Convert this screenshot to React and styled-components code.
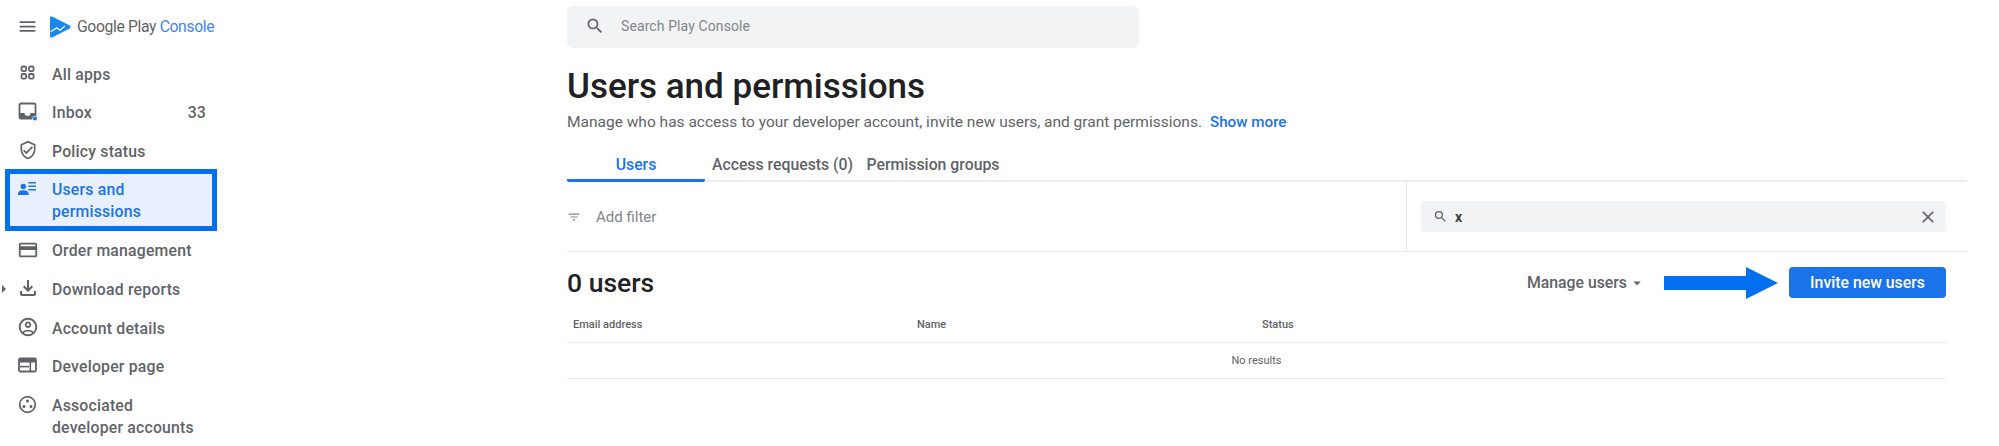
import styled, { createGlobalStyle } from 'styled-components';
import {
  MdMenu,
  MdSearch,
  MdClose,
  MdFilterList,
  MdArrowDropDown,
  MdOutlineVerifiedUser,
  MdOutlineCreditCard,
  MdOutlineFileDownload,
  MdOutlineAccountCircle,
} from 'react-icons/md';

const GlobalStyle = createGlobalStyle`
  html, body {
    margin: 0;
    padding: 0;
    background: #fff;
  }
  body {
    font-family: Roboto, 'Liberation Sans', sans-serif;
    overflow: hidden;
  }
`;

const Page = styled.div`
  display: flex;
  width: 1999px;
  height: 446px;
  overflow: hidden;
`;

const Sidebar = styled.aside`
  flex: 0 0 567px;
  display: flex;
  flex-direction: column;
`;

const Brand = styled.div`
  height: 56px;
  display: flex;
  align-items: center;
  gap: 12px;
  padding: 0 0 1px 17px;
  box-sizing: border-box;
  color: #5f6368;
`;

const BrandName = styled.span`
  margin-left: -6px;
  font-size: 15.7px;
  letter-spacing: -0.35px;
  color: #5f6368;
  span {
    color: #4285f4;
  }
`;

const Nav = styled.nav`
  display: flex;
  flex-direction: column;
  gap: 0.7px;
  width: 217px;
`;

const NavRow = styled.a`
  display: flex;
  align-items: flex-start;
  position: relative;
  padding: 9px 11px 7px 18px;
  font-size: 15.8px;
  font-weight: 500;
  line-height: 22px;
  letter-spacing: 0.2px;
  color: #5f6368;
`;

const ActiveRow = styled(NavRow)`
  margin: -2px 0 0 5px;
  padding: 5px 6px 3px 8px;
  border: 5px solid #0070f0;
  background: #e8f0fe;
  color: #1a73e8;
`;

const IconSlot = styled.span`
  flex: 0 0 19px;
  width: 19px;
  min-width: 0;
  height: 19px;
  display: flex;
  align-items: center;
  justify-content: center;
  svg {
    flex: 0 0 auto;
  }
`;

const NavLabel = styled.span`
  margin-left: 15px;
  flex: 1;
  white-space: nowrap;
`;

const ExpandMark = styled.span`
  position: absolute;
  left: 2px;
  top: 15px;
  border-left: 4px solid #5f6368;
  border-top: 4px solid transparent;
  border-bottom: 4px solid transparent;
`;

const Main = styled.main`
  flex: 1;
  display: flex;
  flex-direction: column;
  padding-right: 32px;
  min-width: 0;
`;

const TopSearch = styled.div`
  width: 572px;
  height: 42px;
  margin-top: 6px;
  padding: 0 0 2px 18px;
  box-sizing: border-box;
  display: flex;
  align-items: center;
  gap: 16px;
  border-radius: 6px;
  background: #f1f3f4;
  color: #5f6368;
  font-size: 14px;
  span {
    color: #80868b;
    letter-spacing: 0.1px;
  }
`;

const Title = styled.h1`
  margin: 17px 0 0;
  font-size: 35px;
  font-weight: 500;
  line-height: 44px;
  color: #202124;
`;

const Description = styled.p`
  margin: 3px 0 0;
  font-size: 15.5px;
  line-height: 20px;
  color: #5f6368;
  white-space: nowrap;
`;

const ShowMore = styled.a`
  margin-left: 8px;
  font-size: 15.2px;
  font-weight: 500;
  color: #1a73e8;
`;

const Tabs = styled.div`
  display: flex;
  height: 32px;
  margin-top: 16px;
  border-bottom: 2px solid #ebedef;
`;

const Tab = styled.a`
  display: flex;
  align-items: flex-start;
  justify-content: center;
  padding-top: 7px;
  box-sizing: border-box;
  height: 34px;
  font-size: 15.8px;
  font-weight: 500;
  line-height: 20px;
  white-space: nowrap;
  color: ${(p) => (p.$active ? '#1a73e8' : '#5f6368')};
  width: ${(p) => p.$width}px;
  ${(p) => p.$active && 'border-bottom: 3px solid #1a73e8; border-radius: 2px;'}
`;

const FilterRow = styled.div`
  display: flex;
  height: 69px;
  border-bottom: 1px solid #e8eaed;
`;

const FilterCell = styled.div`
  flex: 0 0 840px;
  display: flex;
  align-items: center;
  gap: 15px;
  padding-top: 1px;
  box-sizing: border-box;
  border-right: 1px solid #e8eaed;
  font-size: 15px;
  color: #80868b;
`;

const TableSearch = styled.div`
  flex: 1;
  margin: 19px 21px 19px 14px;
  display: flex;
  align-items: center;
  padding: 0 8px 0 12px;
  border-radius: 4px;
  background: #f1f3f4;
  color: #5f6368;
`;

const SearchValue = styled.span`
  flex: 1;
  margin-left: 7px;
  font-size: 14px;
  font-weight: 700;
  color: #3c4043;
`;

const Toolbar = styled.div`
  display: flex;
  align-items: flex-start;
  justify-content: space-between;
  height: 54px;
  padding: 15px 21px 0 0;
  box-sizing: border-box;
`;

const UserCount = styled.h2`
  margin: 0;
  font-size: 26.5px;
  font-weight: 500;
  line-height: 31px;
  color: #202124;
`;

const Actions = styled.div`
  display: flex;
  align-items: center;
  height: 31px;
`;

const Manage = styled.a`
  display: flex;
  align-items: center;
  font-size: 15.8px;
  font-weight: 500;
  color: #5f6368;
  svg {
    margin-left: 1px;
  }
`;

const Pointer = styled.svg`
  margin: 0 11px 0 18px;
`;

const InviteButton = styled.button`
  width: 157px;
  height: 31px;
  padding: 0;
  border: 0;
  border-radius: 4px;
  background: #1a73e8;
  color: #fff;
  font: 500 15.8px Roboto, sans-serif;
`;

const Table = styled.div`
  margin-right: 21px;
`;

const HeadRow = styled.div`
  display: grid;
  grid-template-columns: 344px 345px 1fr;
  height: 36px;
  padding-left: 6px;
  align-items: center;
  border-bottom: 1px solid #e8eaed;
  font-size: 11px;
  font-weight: 500;
  color: #5f6368;
`;

const EmptyRow = styled.div`
  height: 35px;
  display: flex;
  align-items: center;
  justify-content: center;
  border-bottom: 1px solid #e8eaed;
  font-size: 11px;
  color: #5f6368;
`;

const LogoMark = () => (
  <svg width="21" height="22" viewBox="0 0 21 22">
    <path
      d="M2 0.4 L19.8 9.6 Q21.4 11 19.8 12.4 L2 21.6 Q0 22.3 0 20 V2 Q0 -0.3 2 0.4 Z"
      fill="#1a86f0"
    />
    <path
      d="M0.7 15.7 L6.7 11.7 L10 14.3 L15 10"
      fill="none"
      stroke="#fff"
      strokeWidth="1.2"
      strokeLinejoin="round"
    />
  </svg>
);

const AppsIcon = () => (
  <svg width="19" height="19" viewBox="0 0 19 19" fill="none" stroke="currentColor" strokeWidth="1.8">
    <rect x="3.5" y="2.5" width="4.6" height="4.6" rx="1.4" />
    <rect x="11" y="2.5" width="4.6" height="4.6" rx="1.4" />
    <rect x="3.5" y="10" width="4.6" height="4.6" rx="1.4" />
    <rect x="11" y="10" width="4.6" height="4.6" rx="1.4" />
  </svg>
);

const InboxIcon = () => (
  <svg width="19" height="19" viewBox="0 0 19 19">
    <path
      d="M3 1.5 H16 A1.5 1.5 0 0 1 17.5 3 V15 A1.5 1.5 0 0 1 16 16.5 H3 A1.5 1.5 0 0 1 1.5 15 V3 A1.5 1.5 0 0 1 3 1.5 Z"
      fill="none"
      stroke="#5f6368"
      strokeWidth="1.8"
    />
    <path d="M2 11 H6.5 A3 3 0 0 0 12.5 11 H17 V16 H2 Z" fill="#5f6368" />
    <circle cx="17" cy="16.5" r="2.6" fill="#fff" />
    <circle cx="17" cy="16.5" r="2" fill="#1a73e8" />
  </svg>
);

const PeopleListIcon = () => (
  <svg width="19" height="19" viewBox="0 0 19 19" fill="#1a73e8">
    <circle cx="5.3" cy="7.5" r="2.7" />
    <path d="M0 15 C0 12.2 2.6 11.2 5.3 11.2 C8 11.2 10.6 12.2 10.6 15 V16 H0 Z" />
    <rect x="10.3" y="3" width="7.7" height="1.5" />
    <rect x="10.3" y="6.5" width="7.7" height="1.5" />
    <rect x="10.3" y="10" width="7.7" height="1.5" />
  </svg>
);

const DevPageIcon = () => (
  <svg width="19" height="19" viewBox="0 0 19 19">
    <rect x="1" y="2.5" width="17" height="13" rx="1.5" fill="none" stroke="#5f6368" strokeWidth="1.8" />
    <rect x="1" y="2.5" width="17" height="4" fill="#5f6368" />
    <rect x="2" y="9.8" width="9" height="1.6" fill="#5f6368" />
    <rect x="11.5" y="6" width="1.6" height="9" fill="#5f6368" />
  </svg>
);

const NetworkIcon = () => (
  <svg width="19" height="19" viewBox="0 0 19 19">
    <circle cx="9.5" cy="9.5" r="7.8" fill="none" stroke="#5f6368" strokeWidth="1.7" />
    <circle cx="9.5" cy="6" r="1.5" fill="#5f6368" />
    <circle cx="6" cy="11.5" r="1.5" fill="#5f6368" />
    <circle cx="13" cy="11.5" r="1.5" fill="#5f6368" />
  </svg>
);

const navTop = [
  { label: 'All apps', icon: <AppsIcon /> },
  { label: 'Inbox', icon: <InboxIcon />, count: 33 },
  { label: 'Policy status', icon: <MdOutlineVerifiedUser size={20} /> },
];

const navBottom = [
  { label: 'Order management', icon: <MdOutlineCreditCard size={22} /> },
  { label: 'Download reports', icon: <MdOutlineFileDownload size={24} />, expandable: true },
  { label: 'Account details', icon: <MdOutlineAccountCircle size={22} /> },
  { label: 'Developer page', icon: <DevPageIcon /> },
  {
    label: (
      <>
        Associated
        <br />
        developer accounts
      </>
    ),
    key: 'associated',
    icon: <NetworkIcon />,
  },
];

function NavItem({ item }) {
  return (
    <NavRow>
      {item.expandable && <ExpandMark />}
      <IconSlot>{item.icon}</IconSlot>
      <NavLabel>{item.label}</NavLabel>
      {item.count && <span>{item.count}</span>}
    </NavRow>
  );
}

export default function App() {
  return (
    <Page>
      <GlobalStyle />
      <Sidebar>
        <Brand>
          <MdMenu size={21} />
          <LogoMark />
          <BrandName>
            Google Play <span>Console</span>
          </BrandName>
        </Brand>
        <Nav>
          {navTop.map((item) => (
            <NavItem item={item} key={item.label} />
          ))}
          <ActiveRow>
            <IconSlot>
              <PeopleListIcon />
            </IconSlot>
            <NavLabel>
              Users and
              <br />
              permissions
            </NavLabel>
          </ActiveRow>
          {navBottom.map((item) => (
            <NavItem item={item} key={item.key || item.label} />
          ))}
        </Nav>
      </Sidebar>
      <Main>
        <TopSearch>
          <MdSearch size={20} />
          <span>Search Play Console</span>
        </TopSearch>
        <Title>Users and permissions</Title>
        <Description>
          Manage who has access to your developer account, invite new users, and grant permissions.
          <ShowMore>Show more</ShowMore>
        </Description>
        <Tabs>
          <Tab $active $width={138}>Users</Tab>
          <Tab $width={155}>Access requests (0)</Tab>
          <Tab $width={146}>Permission groups</Tab>
        </Tabs>
        <FilterRow>
          <FilterCell>
            <MdFilterList size={14} />
            <span>Add filter</span>
          </FilterCell>
          <TableSearch>
            <MdSearch size={15} />
            <SearchValue>x</SearchValue>
            <MdClose size={20} />
          </TableSearch>
        </FilterRow>
        <Toolbar>
          <UserCount>0 users</UserCount>
          <Actions>
            <Manage>
              Manage users
              <MdArrowDropDown size={18} />
            </Manage>
            <Pointer width="114" height="32" viewBox="0 0 114 32">
              <path d="M0 9 H82 V0 L114 16 L82 32 V23 H0 Z" fill="#0070f0" />
            </Pointer>
            <InviteButton>Invite new users</InviteButton>
          </Actions>
        </Toolbar>
        <Table>
          <HeadRow>
            <span>Email address</span>
            <span>Name</span>
            <span>Status</span>
          </HeadRow>
          <EmptyRow>No results</EmptyRow>
        </Table>
      </Main>
    </Page>
  );
}
